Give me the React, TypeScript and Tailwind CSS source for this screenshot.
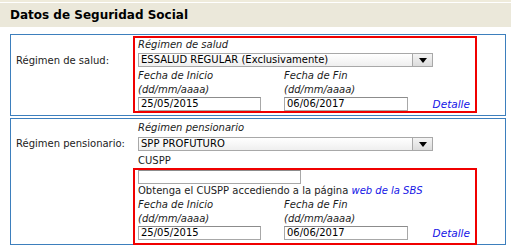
import React from "react";

function Select({ value }: { value: string }) {
  return (
    <div className="flex h-[14px] w-[295px] border border-[#a8a8a8] bg-gradient-to-b from-white to-[#efefef]">
      <div className="flex-1 pl-[2px] leading-[12px] text-black whitespace-nowrap overflow-hidden">{value}</div>
      <div className="flex w-[20px] items-center justify-center border-l border-[#a8a8a8] bg-gradient-to-b from-[#f4f4f4] to-[#dcdcdc]">
        <svg width="8" height="5" viewBox="0 0 8 5">
          <path d="M0 0 L8 0 L4 5 Z" fill="#000" />
        </svg>
      </div>
    </div>
  );
}

function Field({ value, w }: { value: string; w: string }) {
  return (
    <div className={`h-[14px] ${w} border border-[#a8a8a8] border-t-[#8c8c8c] bg-white pl-[2px] leading-[12px] text-black`}>
      {value}
    </div>
  );
}

function Dates() {
  return (
    <div className="flex">
      <div className="w-[146px]">
        <div className="h-[14px] leading-[14px] italic">Fecha de Inicio</div>
        <div className="h-[14px] leading-[14px] italic">(dd/mm/aaaa)</div>
        <Field value="25/05/2015" w="w-[123px]" />
      </div>
      <div className="w-[124px]">
        <div className="h-[14px] leading-[14px] italic">Fecha de Fin</div>
        <div className="h-[14px] leading-[14px] italic">(dd/mm/aaaa)</div>
        <Field value="06/06/2017" w="w-[124px]" />
      </div>
      <div className="flex flex-1 items-end justify-end pr-[5px]">
        <span className="text-[10.5px] leading-[14px] italic text-[#1414e6]">Detalle</span>
      </div>
    </div>
  );
}

export default function App() {
  return (
    <div
      className="relative h-[252px] w-[511px] overflow-hidden bg-white text-[10px] text-[#1c1c1c]"
      style={{ fontFamily: '"DejaVu Sans", Verdana, sans-serif' }}
    >
      <div className="h-[2px] bg-[#efebdb]" />
      <div className="mt-[1px] flex h-[24px] items-center bg-[#ebe8da] pl-[10px] text-[12px] font-bold text-black">
        Datos de Seguridad Social
      </div>

      {/* salud */}
      <div className="ml-[10px] mt-[7px] flex h-[82px] w-[496px] border border-[#3d7fbd]">
        <div className="w-[122px] pl-[5px] pt-[19px] leading-[14px]">Régimen de salud:</div>
        <div className="mt-[1px] h-[77px] w-[344px] border-2 border-[#f00000] pl-[3px]">
          <div className="h-[14px] leading-[14px] italic">Régimen de salud</div>
          <div className="mt-[1px]">
            <Select value="ESSALUD REGULAR (Exclusivamente)" />
          </div>
          <div className="mt-[2px]">
            <Dates />
          </div>
        </div>
      </div>

      {/* pensionario */}
      <div className="ml-[10px] mt-[2px] flex h-[127px] w-[496px] border border-[#3d7fbd]">
        <div className="w-[122px] pl-[5px] pt-[18px] leading-[14px]">Régimen pensionario:</div>
        <div className="w-[344px]">
          <div className="pl-[5px] pt-[2px]">
            <div className="h-[14px] leading-[14px] italic">Régimen pensionario</div>
            <div className="mt-[2px]">
              <Select value="SPP PROFUTURO" />
            </div>
            <div className="mt-[3px] h-[14px] leading-[14px]">CUSPP</div>
          </div>
          <div className="h-[77px] border-2 border-[#f00000] pl-[3px]">
            <Field value="" w="w-[163px]" />
            <div className="h-[14px] leading-[14px] whitespace-nowrap">
              Obtenga el CUSPP accediendo a la página{" "}
              <span className="italic text-[#1414e6]">web de la SBS</span>
            </div>
            <Dates />
          </div>
        </div>
      </div>
    </div>
  );
}
